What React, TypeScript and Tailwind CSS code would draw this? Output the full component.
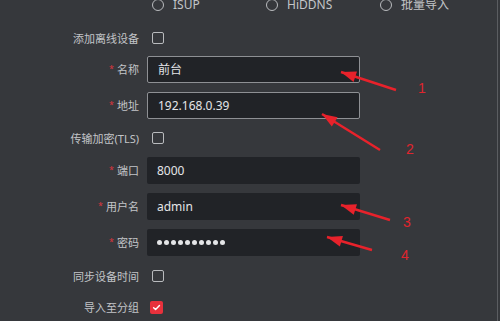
import React from 'react';

const font = { fontFamily: '"Noto Sans", "Noto Sans CJK SC", sans-serif' };

// red annotation arrows: tail -> tip, plus the number beside them
const arrows = [
  { from: [396, 90], to: [341, 72], n: '1', at: [422, 93] },
  { from: [380, 150], to: [322, 114], n: '2', at: [410, 154] },
  { from: [390, 220], to: [341, 205], n: '3', at: [407, 227] },
  { from: [372, 250], to: [327, 237], n: '4', at: [405, 260] },
];

const headPoints = (from: number[], to: number[]) => {
  const dx = to[0] - from[0];
  const dy = to[1] - from[1];
  const len = Math.hypot(dx, dy);
  const ux = dx / len;
  const uy = dy / len;
  const bx = to[0] - ux * 15;
  const by = to[1] - uy * 15;
  const w = 5.5;
  return `${to[0]},${to[1]} ${bx - uy * w},${by + ux * w} ${bx + uy * w},${by - ux * w}`;
};

const Label = ({ text, required }: { text: string; required?: boolean }) => (
  <div className="w-[139px] shrink-0 text-right text-[11px] leading-none text-[#c3c5c8]">
    {required && <span className="mr-[3px] text-[9px] align-top text-[#d9363e]">*</span>}
    {text}
  </div>
);

const Checkbox = ({ checked }: { checked?: boolean }) =>
  checked ? (
    <div className="ml-[3px] flex h-[13px] w-[13px] items-center justify-center rounded-[2px] bg-[#e8313c]">
      <svg width="9" height="9" viewBox="0 0 10 10" fill="none">
        <path d="M1.8 5.2 L4 7.3 L8.3 2.8" stroke="white" strokeWidth="1.6" strokeLinecap="round" strokeLinejoin="round" />
      </svg>
    </div>
  ) : (
    <div className="ml-[5px] h-[12px] w-[12px] rounded-[2px] border border-[#b9bbbe]" />
  );

const CheckRow = ({ label, checked, className }: { label: string; checked?: boolean; className?: string }) => (
  <div className={`flex h-[24px] items-center ${className ?? ''}`}>
    <Label text={label} />
    <div className="ml-[8px]">
      <Checkbox checked={checked} />
    </div>
  </div>
);

const InputRow = ({
  label,
  children,
  bordered,
  className,
}: {
  label: string;
  children: React.ReactNode;
  bordered?: boolean;
  className?: string;
}) => (
  <div className={`flex items-center ${className ?? ''}`}>
    <Label text={label} required />
    <div
      className={`ml-[8px] flex h-[27px] w-[213px] items-center rounded-[2px] bg-[#212327] pl-[10px] text-[12px] text-[#e4e5e7] ${
        bordered ? 'border border-[#8e9094]' : ''
      }`}
    >
      {children}
    </div>
  </div>
);

const radios = ['ISUP', 'HiDDNS', '批量导入'];

export default function App() {
  return (
    <div className="relative h-[321px] w-[500px] overflow-hidden bg-[#36383c]" style={font}>
      <div className="flex h-full w-[498px] flex-col border-r border-[#5b5d61]">
        {/* protocol radios, cut off at the top */}
        <div className="-mt-[1px] flex h-[12px] items-center pl-[152px] text-[12px] text-[#c3c5c8]">
          {radios.map((r, i) => (
            <div key={r} className={`flex items-center gap-[9px] ${i === 2 ? '' : 'w-[114px]'}`}>
              <div className="h-[12px] w-[12px] rounded-full border border-[#b9bbbe]" />
              <span className="leading-none">{r}</span>
            </div>
          ))}
        </div>

        <CheckRow label="添加离线设备" className="mt-[15px]" />
        <InputRow label="名称" bordered className="mt-[6px]">前台</InputRow>
        <InputRow label="地址" bordered className="mt-[9px]">192.168.0.39</InputRow>
        <CheckRow label="传输加密(TLS)" className="mt-[7px]" />
        <InputRow label="端口" className="mt-[7px]">8000</InputRow>
        <InputRow label="用户名" className="mt-[9px]">admin</InputRow>
        <InputRow label="密码" className="mt-[9px]">
          <div className="flex gap-[2px]">
            {Array.from({ length: 10 }).map((_, i) => (
              <div key={i} className="h-[5px] w-[5px] rounded-full bg-[#e4e5e7]" />
            ))}
          </div>
        </InputRow>
        <CheckRow label="同步设备时间" className="mt-[8px]" />
        <CheckRow label="导入至分组" checked className="mt-[7px]" />
      </div>

      {/* annotation overlay */}
      <svg className="pointer-events-none absolute inset-0" width="500" height="321">
        {arrows.map((a) => (
          <g key={a.n}>
            <line x1={a.from[0]} y1={a.from[1]} x2={a.to[0]} y2={a.to[1]} stroke="#e8222b" strokeWidth="2.4" />
            <polygon points={headPoints(a.from, a.to)} fill="#e8222b" />
            <text x={a.at[0]} y={a.at[1]} fill="#e0252e" fontSize="14" textAnchor="middle" fontFamily="Liberation Sans, sans-serif">
              {a.n}
            </text>
          </g>
        ))}
      </svg>
    </div>
  );
}
